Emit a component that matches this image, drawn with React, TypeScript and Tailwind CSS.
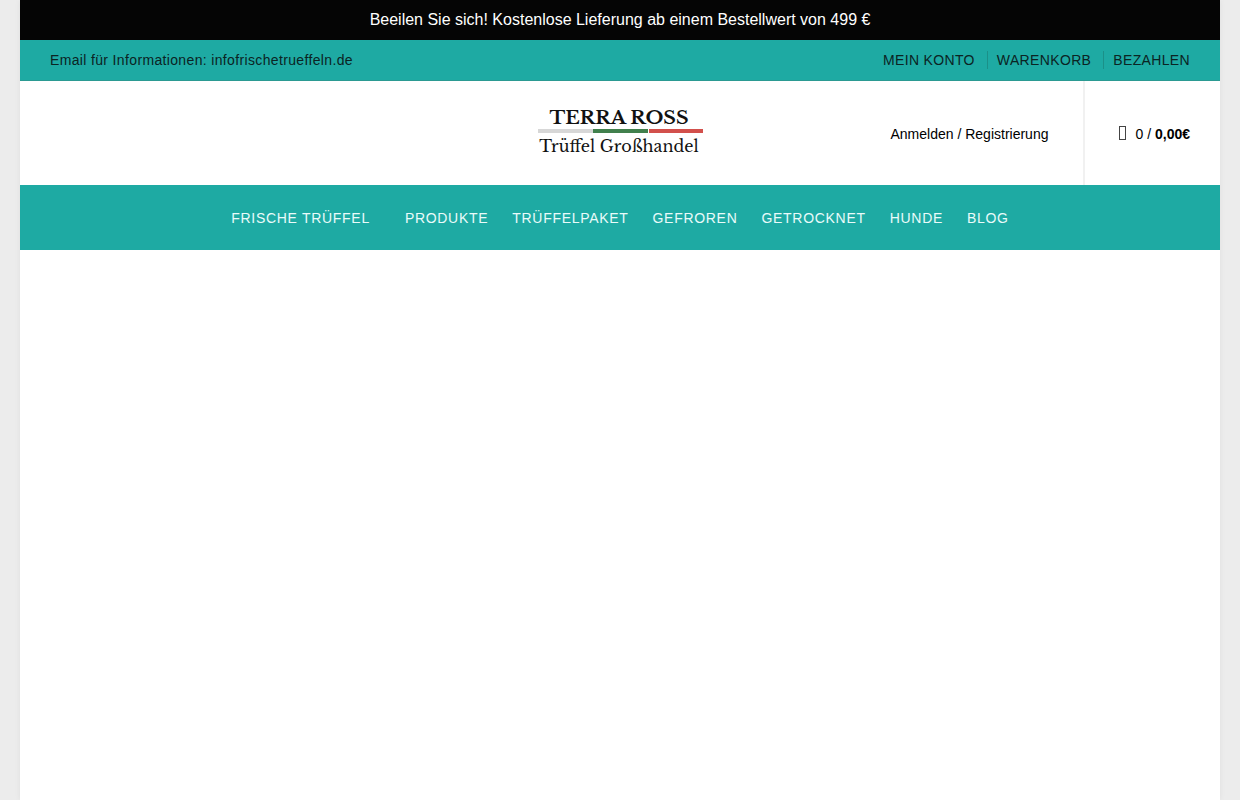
import React from "react";

const accountLinks = ["Mein Konto", "Warenkorb", "Bezahlen"];
const shopLinks = ["Produkte", "Trüffelpaket", "Gefroren", "Getrocknet", "Hunde", "Blog"];

function Logo() {
  return (
    <a href="#" aria-label="Terra Ross Trüffel Großhandel" className="block">
      <svg width="168" height="56" viewBox="0 0 168 56" className="block font-['Libre_Baskerville','Liberation_Serif',serif]">
        <text x="83" y="19" textAnchor="middle" fontSize="19" fontWeight="700" fill="#111">
          TERRA ROSS
        </text>
        <rect x="2" y="24" width="55" height="4" fill="#d7d7d7" />
        <rect x="57" y="24" width="55" height="4" fill="#41804d" />
        <rect x="113" y="24" width="54" height="4" fill="#d2504c" />
        <text x="83" y="47" textAnchor="middle" fontSize="16" fill="#111">
          Trüffel Großhandel
        </text>
      </svg>
    </a>
  );
}

function CartIcon() {
  return (
    <svg width="7" height="16" viewBox="0 0 7 16" fill="none" stroke="#444" aria-hidden="true">
      <rect x="0.5" y="0.5" width="6" height="13" />
    </svg>
  );
}

export default function App() {
  return (
    <div className="min-h-screen bg-[#ececec] px-5 font-['Liberation_Sans',Arial,sans-serif] text-sm text-black">
      <div className="min-h-screen bg-white shadow-[0_0_6px_rgba(0,0,0,0.06)]">
        <p className="flex h-10 items-center justify-center bg-[#050505] text-base text-white">
          Beeilen Sie sich! Kostenlose Lieferung ab einem Bestellwert von 499 €
        </p>

        <header>
          <div className="flex h-[41px] items-center justify-between border-b border-[#2b9a92] bg-[#1eaaa3] px-[30px] tracking-wide text-[#0b2423]">
            <p>Email für Informationen: infofrischetrueffeln.de</p>
            <nav aria-label="Konto" className="flex items-center leading-[18px] uppercase">
              {accountLinks.map((label) => (
                <a
                  key={label}
                  href="#"
                  className="border-l border-[#1b9088] pr-3 pl-[9px] first:border-l-0 first:pl-0 last:pr-0"
                >
                  {label}
                </a>
              ))}
            </nav>
          </div>

          <div className="grid h-[104px] grid-cols-[1fr_auto_1fr] items-center px-[30px]">
            <span />
            <Logo />
            <div className="flex h-full items-center justify-end">
              <a href="#" className="pt-0.5">Anmelden / Registrierung</a>
              <a href="#" className="ml-[35px] flex h-full items-center gap-[9px] border-l-2 border-[#f1f1f1] pt-0.5 pl-[34px]">
                <CartIcon />
                <span>
                  0 / <strong>0,00€</strong>
                </span>
              </a>
            </div>
          </div>

          <nav aria-label="Shop" className="flex h-[65px] items-center justify-center gap-6 bg-[#1eaaa3] tracking-wider text-[#e9fbfa] uppercase">
            <a href="#" className="pr-[11px]">Frische Trüffel</a>
            {shopLinks.map((label) => (
              <a key={label} href="#">
                {label}
              </a>
            ))}
          </nav>
        </header>
        <main />
      </div>
    </div>
  );
}
